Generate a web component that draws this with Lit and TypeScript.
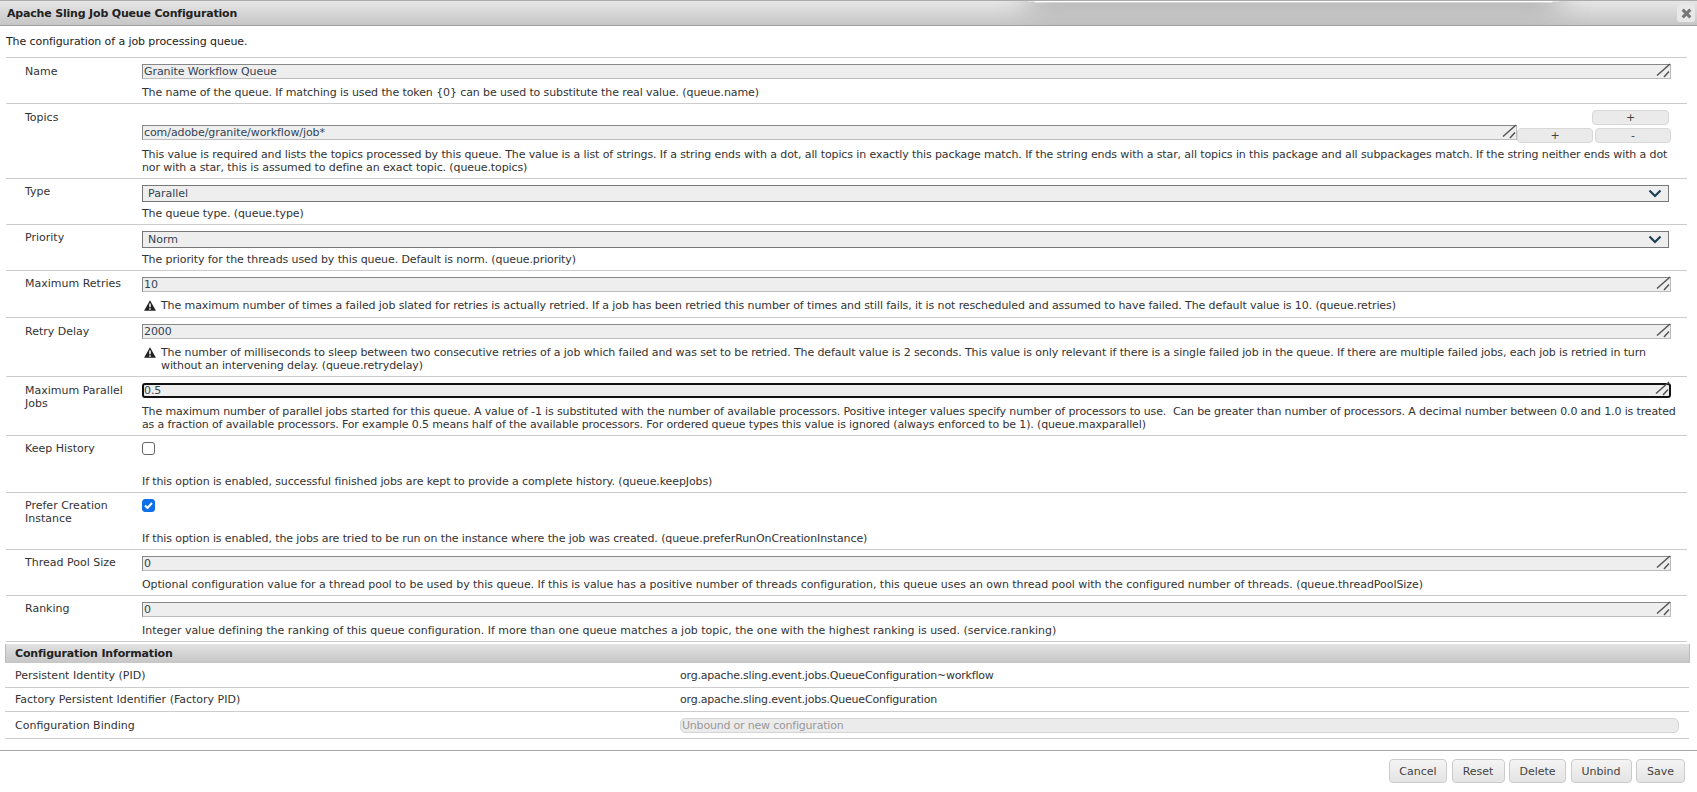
import { LitElement, html, css } from "lit";
import { customElement } from "lit/decorators.js";

type Row = { label: string; kind: string; value?: string; desc: string; warn?: boolean; h: string; checked?: boolean; low?: boolean; ls?: string };

const rows: Row[] = [
  { label: "Name", kind: "text", value: "Granite Workflow Queue", h: "r46", low: true, desc: "The name of the queue. If matching is used the token {0} can be used to substitute the real value. (queue.name)" },
  { label: "Topics", kind: "topics", value: "com/adobe/granite/workflow/job*", h: "r75", low: true, desc: "This value is required and lists the topics processed by this queue. The value is a list of strings. If a string ends with a dot, all topics in exactly this package match. If the string ends with a star, all topics in this package and all subpackages match. If the string neither ends with a dot nor with a star, this is assumed to define an exact topic. (queue.topics)" },
  { label: "Type", kind: "select", value: "Parallel", h: "r46", desc: "The queue type. (queue.type)" },
  { label: "Priority", kind: "select", value: "Norm", h: "r46", desc: "The priority for the threads used by this queue. Default is norm. (queue.priority)" },
  { label: "Maximum Retries", kind: "text", value: "10", warn: true, h: "r47", desc: "The maximum number of times a failed job slated for retries is actually retried. If a job has been retried this number of times and still fails, it is not rescheduled and assumed to have failed. The default value is 10. (queue.retries)" },
  { label: "Retry Delay", kind: "text", value: "2000", warn: true, h: "r59", low: true, desc: "The number of milliseconds to sleep between two consecutive retries of a job which failed and was set to be retried. The default value is 2 seconds. This value is only relevant if there is a single failed job in the queue. If there are multiple failed jobs, each job is retried in turn without an intervening delay. (queue.retrydelay)" },
  { label: "Maximum Parallel Jobs", kind: "focus", value: "0.5", h: "r59", low: true, ls: "tight", desc: "The maximum number of parallel jobs started for this queue. A value of -1 is substituted with the number of available processors. Positive integer values specify number of processors to use.\u00a0 Can be greater than number of processors. A decimal number between 0.0 and 1.0 is treated as a fraction of available processors. For example 0.5 means half of the available processors. For ordered queue types this value is ignored (always enforced to be 1). (queue.maxparallel)" },
  { label: "Keep History", kind: "check", h: "r57", desc: "If this option is enabled, successful finished jobs are kept to provide a complete history. (queue.keepJobs)" },
  { label: "Prefer Creation Instance", kind: "check", checked: true, h: "r57", desc: "If this option is enabled, the jobs are tried to be run on the instance where the job was created. (queue.preferRunOnCreationInstance)" },
  { label: "Thread Pool Size", kind: "text", value: "0", h: "r46", ls: "loose", desc: "Optional configuration value for a thread pool to be used by this queue. If this is value has a positive number of threads configuration, this queue uses an own thread pool with the configured number of threads. (queue.threadPoolSize)" },
  { label: "Ranking", kind: "text", value: "0", h: "r46", ls: "looser", desc: "Integer value defining the ranking of this queue configuration. If more than one queue matches a job topic, the one with the highest ranking is used. (service.ranking)" },
];

const grip = html`<svg class="grip" viewBox="0 0 14 14"><path d="M1 11.5 L14 0 M8 13 L13 7.5" stroke="#555" stroke-width="1.5" fill="none"/></svg>`;

@customElement("app-root")
export class AppRoot extends LitElement {
  static styles = css`
    :host { display: block; width: 1697px; height: 792px; overflow: hidden; background: #fff;
      font-family: "DejaVu Sans", sans-serif; font-size: 11px; line-height: 13px; color: #222; }
    .title { position: relative; overflow: hidden; height: 26px; box-sizing: border-box; border-top: 1px solid #aaa; border-bottom: 1px solid #a0a0a0;
      background: linear-gradient(#e6e6e6, #c6c6c6); display: flex; align-items: center; justify-content: space-between;
      padding: 0 2px 0 7px; font-weight: bold; color: #222; letter-spacing: -0.18px; }
    .toast { position: absolute; left: 1034px; top: -1px; width: 519px; height: 3px; background: #fff; border-radius: 0 0 3px 3px; }
    .toast::before { content: ""; position: absolute; left: -6px; right: -6px; top: -12px; height: 14px; box-shadow: 0 0 30px rgba(0,0,0,.5); }
    .close { width: 18px; height: 18px; border-radius: 3px; background: #e8e8e8; display: flex; align-items: center; justify-content: center; }
    .close svg { width: 11px; height: 11px; }
    .intro { height: 31px; box-sizing: border-box; padding: 9px 0 0 6px; letter-spacing: -0.1px; }
    .table { margin: 0 10px 0 6px; border-top: 1px solid #ccc; }
    .row { display: grid; grid-template-columns: 136px 1fr; box-sizing: border-box; border-bottom: 1px solid #ccc; }
    .r46 { height: 46px; } .r47 { height: 47px; } .r75 { height: 75px; } .r59 { height: 59px; } .r57 { height: 57px; }
    .lbl { padding: 6px 0 0 19px; color: #333; width: 100px; }
    .lbl.low { padding-top: 7px; }
    .cell { padding-top: 6px; min-width: 0; }
    .input { width: 1529px; height: 15px; box-sizing: border-box; background: #eee; border: 1px solid #bbb; border-top-color: #888; border-left-color: #888;
      padding: 0 1px; line-height: 13px; color: #345; position: relative; letter-spacing: -0.08px; }
    .input.focus { border: 2px solid #111; border-radius: 3px; padding: 0; line-height: 11px; }
    .grip { position: absolute; right: 0; bottom: 0; width: 14px; height: 14px; overflow: visible; }
    .select { width: 1527px; height: 17px; box-sizing: border-box; background: #eee; border: 1px solid #777; padding: 0 0 0 5px; line-height: 15px;
      color: #345; display: flex; justify-content: space-between; align-items: center; }
    .select svg { width: 14px; height: 9px; margin-right: 6px; }
    .desc { padding-top: 7px; color: #333; width: 1540px; letter-spacing: -0.105px; }
    .desc.tight { letter-spacing: -0.14px; }
    .desc.loose { letter-spacing: -0.05px; }
    .desc.looser { letter-spacing: -0.02px; }
    .desc.sel { padding-top: 5px; }
    .desc.topic { padding-top: 5px; }
    .warn { display: flex; gap: 5px; padding-left: 2px; }
    .warn svg { width: 12px; height: 11px; flex: none; margin-top: 1px; }
    .warn div { min-width: 0; }
    .topics { display: grid; grid-template-columns: 1375px 76px 78px; grid-template-rows: 15px 15px; height: 33px; }
    .topics .input { width: auto; grid-column: 1; grid-row: 2; }
    .btnS { box-sizing: border-box; height: 15px; border: 1px solid #d8d8d8; border-radius: 4px; background: #eaeaea; color: #444;
      display: flex; align-items: center; justify-content: center; }
    .b1 { grid-column: 3; grid-row: 1; margin: 0 2px 0 -1px; }
    .b2 { grid-column: 2; grid-row: 2; margin-top: 3px; }
    .b3 { grid-column: 3; grid-row: 2; margin: 3px 0 0 2px; }
    .check { width: 13px; height: 13px; box-sizing: border-box; border: 1px solid #666; border-radius: 3px; background: #fff; }
    .check.on { background: #0f6fe8; border-color: #0f6fe8; display: flex; align-items: center; justify-content: center; }
    .check svg { width: 11px; height: 11px; }
    .desc.chk { padding-top: 20px; }
    .sec { margin: 2px 7px 0 5px; height: 19px; box-sizing: border-box; padding: 0 0 0 9px; border-left: 1px solid #bbb; border-right: 1px solid #bbb;
      background: linear-gradient(#e2e2e2, #c6c6c6); font-weight: bold; line-height: 19px; color: #222; letter-spacing: -0.17px; }
    .info { margin: 0 8px 0 5px; }
    .irow { display: grid; grid-template-columns: 665px 1fr; align-items: center; padding-left: 10px; border-bottom: 1px solid #ccc; box-sizing: border-box; color: #333; }
    .val { letter-spacing: -0.2px; }
    .h24 { height: 24px; } .h25 { height: 25px; } .h27 { height: 27px; }
    .bind { width: 999px; height: 15px; box-sizing: border-box; border: 1px solid #d5d5d5; border-radius: 5px; background: #ebebeb; color: #999; line-height: 13px; padding-left: 1px; letter-spacing: -0.2px; }
    .foot { margin-top: 11px; border-top: 1px solid #aaa; display: flex; justify-content: flex-end; gap: 4.5px; padding: 8px 12px 0 0; }
    .btn { box-sizing: border-box; height: 24px; border: 1px solid #ccc; border-radius: 4px; background: linear-gradient(#f4f4f4, #e4e4e4); color: #444;
      display: flex; align-items: center; justify-content: center; }
    .w58 { width: 58px; } .w53 { width: 53px; } .w57 { width: 57px; } .w61 { width: 61px; } .w49 { width: 49px; }
  `;

  renderField(r: Row) {
    if (r.kind === "select")
      return html`<div class="select"><span>${r.value}</span><svg viewBox="0 0 14 9"><path d="M1.5 1.5 L7 7 L12.5 1.5" stroke="#1f3f55" stroke-width="2.2" fill="none"/></svg></div>`;
    if (r.kind === "check")
      return r.checked
        ? html`<div class="check on"><svg viewBox="0 0 11 11"><path d="M2 5.5 L4.5 8 L9 3" stroke="#fff" stroke-width="2" fill="none"/></svg></div>`
        : html`<div class="check"></div>`;
    if (r.kind === "topics")
      return html`<div class="topics">
        <div class="btnS b1">+</div>
        <div class="input">${r.value}${grip}</div>
        <div class="btnS b2">+</div>
        <div class="btnS b3">-</div>
      </div>`;
    return html`<div class="input ${r.kind === "focus" ? "focus" : ""}">${r.value}${grip}</div>`;
  }

  renderDesc(r: Row) {
    if (r.warn)
      return html`<div class="desc warn"><svg viewBox="0 0 12 11"><path d="M6 0.3 L11.9 10.8 H0.1 Z" fill="#222"/><path d="M6 3.5 V7.3 M6 8.2 V9.7" stroke="#fff" stroke-width="1.5"/></svg><div>${r.desc}</div></div>`;
    const cls = r.kind === "check" ? "chk" : r.kind === "select" ? "sel" : r.kind === "topics" ? "topic" : "";
    return html`<div class="desc ${cls} ${r.ls ?? ""}">${r.desc}</div>`;
  }

  render() {
    return html`
      <div class="title"><span>Apache Sling Job Queue Configuration</span>
        <div class="toast"></div>
        <span class="close"><svg viewBox="0 0 10 10"><path d="M1.5 1.5 L8.5 8.5 M8.5 1.5 L1.5 8.5" stroke="#777" stroke-width="2.8"/></svg></span></div>
      <div class="intro">The configuration of a job processing queue.</div>
      <div class="table">
        ${rows.map((r) => html`<div class="row ${r.h}"><div class="lbl ${r.low ? "low" : ""}">${r.label}</div><div class="cell">${this.renderField(r)}${this.renderDesc(r)}</div></div>`)}
      </div>
      <div class="sec">Configuration Information</div>
      <div class="info">
        <div class="irow h25"><span>Persistent Identity (PID)</span><span class="val">org.apache.sling.event.jobs.QueueConfiguration~workflow</span></div>
        <div class="irow h24"><span>Factory Persistent Identifier (Factory PID)</span><span class="val">org.apache.sling.event.jobs.QueueConfiguration</span></div>
        <div class="irow h27"><span>Configuration Binding</span><div class="bind">Unbound or new configuration</div></div>
      </div>
      <div class="foot">
        <div class="btn w58">Cancel</div>
        <div class="btn w53">Reset</div>
        <div class="btn w57">Delete</div>
        <div class="btn w61">Unbind</div>
        <div class="btn w49">Save</div>
      </div>`;
  }
}
